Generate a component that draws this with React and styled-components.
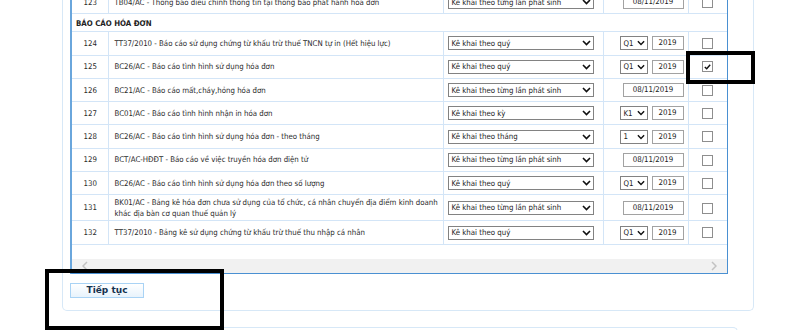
import React from 'react';
import styled, { createGlobalStyle } from 'styled-components';

const GlobalStyle = createGlobalStyle`
  html, body {
    margin: 0;
    padding: 0;
    background: #ffffff;
    overflow: hidden;
  }
  body {
    font-family: "DejaVu Sans Condensed", "DejaVu Sans", sans-serif;
    font-size: 7.8px;
    color: #2a2a2a;
  }
`

const Page = styled.div`
  position: relative;
  width: 800px;
  height: 330px;
  overflow: hidden;
`

// the page is scrolled, the top of the panel is out of view
const Scrolled = styled.div`
  margin-top: -10px;
`

const Panel = styled.div`
  margin-left: 62px;
  width: 674px;
  border: 1px solid #d7e8f7;
  border-top: none;
  border-radius: 0 0 5px 5px;
  padding: 0 9px 12px 7px;
  box-sizing: content-box;
`

const NextPanel = styled.div`
  margin: 16px 0 0 62px;
  width: 674px;
  height: 20px;
  border: 1px solid #d7e8f7;
  border-bottom: none;
  border-radius: 5px 5px 0 0;
`

const TableWrap = styled.div`
  border-left: 2px solid #6aa6dc;
  border-right: 1px solid #4a90d2;
  border-bottom: 1px solid #4a90d2;
  width: 655px;
`

const Table = styled.table`
  width: 100%;
  table-layout: fixed;
  border-collapse: collapse;
`

const Row = styled.tr`
  height: ${props => props.height || '23.3px'};
`

const Cell = styled.td`
  border: 1px solid #d3e5f7;
  padding: 0 ${props => props.padRight || '4px'} 0 ${props => props.padLeft || '5px'};
  text-align: ${props => props.align || 'left'};
  vertical-align: middle;
  line-height: 11px;
  &:first-child {
    border-left: none;
  }
  &:last-child {
    border-right: none;
  }
`

const SectionCell = styled.td`
  border: 1px solid #d3e5f7;
  border-left: none;
  border-right: none;
  padding: 1px 4px 0;
  line-height: 11px;
  vertical-align: middle;
  font-weight: bold;
  color: #222222;
`

const SelectBox = styled.div`
  display: flex;
  align-items: center;
  justify-content: space-between;
  box-sizing: border-box;
  width: ${props => props.width};
  height: 14px;
  border: 1px solid #828282;
  background: #ffffff;
  padding: 0 2px 0 3px;
  color: #222222;
  white-space: nowrap;
`

const Period = styled.div`
  display: flex;
  justify-content: flex-end;
  gap: 4px;
`

const Field = styled.div`
  box-sizing: border-box;
  width: ${props => props.width};
  height: 14px;
  line-height: 12px;
  border: 1px solid #a2a2a2;
  text-align: center;
  color: #222222;
`

const Check = styled.span`
  display: inline-flex;
  align-items: center;
  justify-content: center;
  box-sizing: border-box;
  width: 11px;
  height: 11px;
  border: 1px solid #8e8e8e;
  background: #ffffff;
  vertical-align: middle;
`

const Spacer = styled.div`
  height: 14px;
`

const Scrollbar = styled.div`
  display: flex;
  align-items: center;
  justify-content: space-between;
  height: 14px;
  background: #f1f1f1;
  padding: 0 10px;
`

const ButtonRow = styled.div`
  padding-top: 9px;
  display: flex;
`

const Button = styled.button`
  width: 74px;
  height: 15px;
  padding: 0;
  border: 1px solid #a9d3f5;
  background: linear-gradient(#ffffff, #e8f3fc);
  font-family: "DejaVu Sans", sans-serif;
  font-size: 9px;
  line-height: 12px;
  font-weight: bold;
  color: #16324f;
`

const Annotation = styled.div`
  position: absolute;
  left: ${props => props.x}px;
  top: ${props => props.y}px;
  width: ${props => props.w}px;
  height: ${props => props.h}px;
  box-sizing: border-box;
  border: 4px solid #000000;
`

const Chevron = ({ w = 9 }) => (
  <svg width={w} height="6" viewBox="0 0 9 6">
    <path d="M1 1 L4.5 4.6 L8 1" fill="none" stroke="#111" strokeWidth="1.6" />
  </svg>
);

const Arrow = ({ left }) => (
  <svg width="6" height="10" viewBox="0 0 6 10">
    <path d={left ? 'M5 1 L1 5 L5 9' : 'M1 1 L5 5 L1 9'} fill="none" stroke="#c2c2c2" strokeWidth="1.5" />
  </svg>
);

const Select = ({ children, width }) => (
  <SelectBox width={width}>
    <span>{children}</span>
    <Chevron />
  </SelectBox>
);

const rows = [
  { no: 124, name: 'TT37/2010 - Báo cáo sử dụng chứng từ khấu trừ thuế TNCN tự in (Hết hiệu lực)', kind: 'Kê khai theo quý', period: 'Q1' },
  { no: 125, name: 'BC26/AC - Báo cáo tình hình sử dụng hóa đơn', kind: 'Kê khai theo quý', period: 'Q1', checked: true },
  { no: 126, name: 'BC21/AC - Báo cáo mất,cháy,hỏng hóa đơn', kind: 'Kê khai theo từng lần phát sinh' },
  { no: 127, name: 'BC01/AC - Báo cáo tình hình nhận in hóa đơn', kind: 'Kê khai theo kỳ', period: 'K1' },
  { no: 128, name: 'BC26/AC - Báo cáo tình hình sử dụng hóa đơn - theo tháng', kind: 'Kê khai theo tháng', period: '1' },
  { no: 129, name: 'BCT/AC-HĐĐT - Báo cáo về việc truyền hóa đơn điện tử', kind: 'Kê khai theo từng lần phát sinh' },
  { no: 130, name: 'BC26/AC - Báo cáo tình hình sử dụng hóa đơn theo số lượng', kind: 'Kê khai theo quý', period: 'Q1' },
  { no: 131, name: 'BK01/AC - Bảng kê hóa đơn chưa sử dụng của tổ chức, cá nhân chuyển địa điểm kinh doanh khác địa bàn cơ quan thuế quản lý', kind: 'Kê khai theo từng lần phát sinh', tall: true },
  { no: 132, name: 'TT37/2010 - Bảng kê sử dụng chứng từ khấu trừ thuế thu nhập cá nhân', kind: 'Kê khai theo quý', period: 'Q1' },
];

const FormRow = ({ row }) => (
  <Row height={row.tall ? '26px' : undefined}>
    <Cell align="center">{row.no}</Cell>
    <Cell padLeft="6px" padRight="2px">{row.name}</Cell>
    <Cell padLeft="4px">
      <Select width="146px">{row.kind}</Select>
    </Cell>
    <Cell padRight="4px">
      {row.period ? (
        <Period>
          <SelectBox width="28px">
            <span>{row.period}</span>
            <Chevron w={8} />
          </SelectBox>
          <Field width="32px">2019</Field>
        </Period>
      ) : (
        <Period>
          <Field width="61px">08/11/2019</Field>
        </Period>
      )}
    </Cell>
    <Cell align="center" padLeft="0" padRight="0">
      <Check>
        {row.checked && (
          <svg width="7" height="6" viewBox="0 0 7 6">
            <path d="M0.8 3 L2.7 4.8 L6.2 0.8" fill="none" stroke="#111" strokeWidth="1.4" />
          </svg>
        )}
      </Check>
    </Cell>
  </Row>
);

export default function App() {
  return (
    <Page>
      <GlobalStyle />
      <Scrolled>
        <Panel>
          <TableWrap>
            <Table>
              <colgroup>
                <col style={{ width: 36 }} />
                <col style={{ width: 335 }} />
                <col style={{ width: 160 }} />
                <col style={{ width: 85 }} />
                <col style={{ width: 39 }} />
              </colgroup>
              <tbody>
                <FormRow row={{ no: 123, name: 'TB04/AC - Thông báo điều chỉnh thông tin tại thông báo phát hành hóa đơn', kind: 'Kê khai theo từng lần phát sinh' }} />
                <Row height="18px">
                  <SectionCell colSpan={5}>BÁO CÁO HÓA ĐƠN</SectionCell>
                </Row>
                {rows.map(row => <FormRow key={row.no} row={row} />)}
              </tbody>
            </Table>
            <Spacer />
            <Scrollbar>
              <Arrow left />
              <Arrow />
            </Scrollbar>
          </TableWrap>
          <ButtonRow>
            <Button>Tiếp tục</Button>
          </ButtonRow>
        </Panel>
        <NextPanel />
      </Scrolled>
      <Annotation x={686} y={51} w={69} h={33} />
      <Annotation x={45} y={269} w={179} h={61} />
    </Page>
  );
}
